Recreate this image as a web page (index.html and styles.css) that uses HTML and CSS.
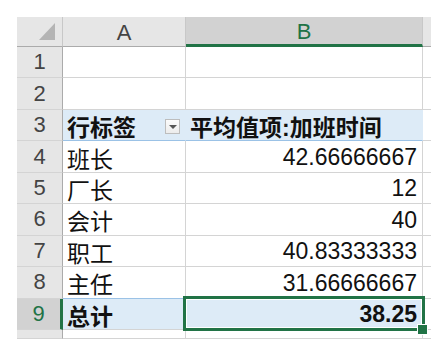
FILE: index.html
```html
<!DOCTYPE html>
<html lang="zh-CN">
<head>
    <meta charset="UTF-8">
    <title>数据透视表</title>
    <link rel="stylesheet" href="styles.css">
</head>
<body>
    <div class="sheet">
        <!-- column headers -->
        <div class="corner">
            <svg viewBox="0 0 16 17" width="16" height="17"><polygon points="16,0 16,17 0,17" fill="#b4b4b4"/></svg>
        </div>
        <div class="col-head">A</div>
        <div class="col-head active">B</div>
        <div class="col-head edge"></div>

        <div class="row-head">1</div>
        <div class="cell"></div>
        <div class="cell"></div>
        <div class="cell edge"></div>

        <div class="row-head">2</div>
        <div class="cell"></div>
        <div class="cell"></div>
        <div class="cell edge"></div>

        <div class="row-head">3</div>
        <div class="cell pivot-head">
            <span>行标签</span>
            <span class="filter-btn"></span>
        </div>
        <div class="cell pivot-head">平均值项:加班时间</div>
        <div class="cell edge"></div>

        <div class="row-head">4</div>
        <div class="cell">班长</div>
        <div class="cell num">42.66666667</div>
        <div class="cell edge"></div>

        <div class="row-head">5</div>
        <div class="cell">厂长</div>
        <div class="cell num">12</div>
        <div class="cell edge"></div>

        <div class="row-head">6</div>
        <div class="cell">会计</div>
        <div class="cell num">40</div>
        <div class="cell edge"></div>

        <div class="row-head">7</div>
        <div class="cell">职工</div>
        <div class="cell num">40.83333333</div>
        <div class="cell edge"></div>

        <div class="row-head">8</div>
        <div class="cell above-total">主任</div>
        <div class="cell num above-total">31.66666667</div>
        <div class="cell edge"></div>

        <div class="row-head active">9</div>
        <div class="cell total">总计</div>
        <div class="cell num total sel">38.25</div>
        <div class="cell edge"></div>

        <div class="row-head"></div>
        <div class="cell"></div>
        <div class="cell"></div>
        <div class="cell edge"></div>
    </div>
</body>
</html>
```

FILE: styles.css
```css
* { margin: 0; padding: 0; box-sizing: border-box; }
body {
    background: #ffffff;
    font-family: "Liberation Sans", "Noto Sans CJK SC", sans-serif;
    color: #111;
}
.sheet {
    display: grid;
    grid-template-columns: 46px 123px 237px 8px;
    grid-template-rows: 30px repeat(9, 31.44px) 9px;
    margin: 17px 0 0 17px;
    width: 414px;
}

/* headers */
.corner, .col-head, .row-head {
    background: #e6e6e6;
    color: #444;
    font-size: 22px;
    display: flex;
    align-items: center;
    justify-content: center;
}
.corner {
    border-right: 1px solid #c8c8c8;
    border-bottom: 1px solid #ababab;
    align-items: flex-end;
    justify-content: flex-end;
    padding: 0 7px 6px 0;
}
.corner svg { display: block; }
.col-head {
    border-right: 1px solid #c8c8c8;
    border-bottom: 1px solid #ababab;
    padding-top: 2px;
}
.col-head.active {
    background: #d2d2d2;
    color: #217346;
    border-bottom: 3px solid #217346;
}
.col-head.edge { border-right: none; }
.row-head {
    border-right: 1px solid #ababab;
    border-bottom: 1px solid #d4d4d4;
}
.row-head.active {
    background: #d2d2d2;
    color: #217346;
    border-right: 3px solid #217346;
}

/* cells */
.cell {
    font-size: 23px;
    display: flex;
    align-items: center;
    padding: 2px 5px 0 4px;
    border-right: 1px solid #d4d4d4;
    border-bottom: 1px solid #d4d4d4;
    white-space: nowrap;
}
.cell.edge { border-right: none; padding: 0; }
.num { justify-content: flex-end; }
.pivot-head {
    background: #ddebf7;
    font-weight: bold;
    border-right-color: #ddebf7;
    border-bottom: 1px solid #9bc2e6;
}
.filter-btn {
    width: 15px;
    height: 15px;
    margin-left: auto;
    margin-right: 0;
    background: linear-gradient(#fbfbfb, #ececec);
    border: 1px solid #bdbdbd;
    position: relative;
}
.filter-btn::after {
    content: "";
    position: absolute;
    left: 3px;
    top: 5px;
    border-left: 4px solid transparent;
    border-right: 4px solid transparent;
    border-top: 4px solid #555;
}
.above-total { border-bottom-color: #9bc2e6; }
.total {
    background: #ddebf7;
    font-weight: bold;
    border-right-color: #ddebf7;
}

/* active cell frame and fill handle */
.sel { position: relative; }
.sel::after {
    content: "";
    position: absolute;
    top: -3px; left: -3px; right: -3px; bottom: -2px;
    border: 3px solid #217346;
    box-shadow: inset 0 0 0 1px #ffffff;
    pointer-events: none;
}
.sel::before {
    content: "";
    position: absolute;
    right: -6px;
    bottom: -6px;
    width: 9px;
    height: 9px;
    background: #217346;
    border: 1px solid #ffffff;
    z-index: 1;
}
```
